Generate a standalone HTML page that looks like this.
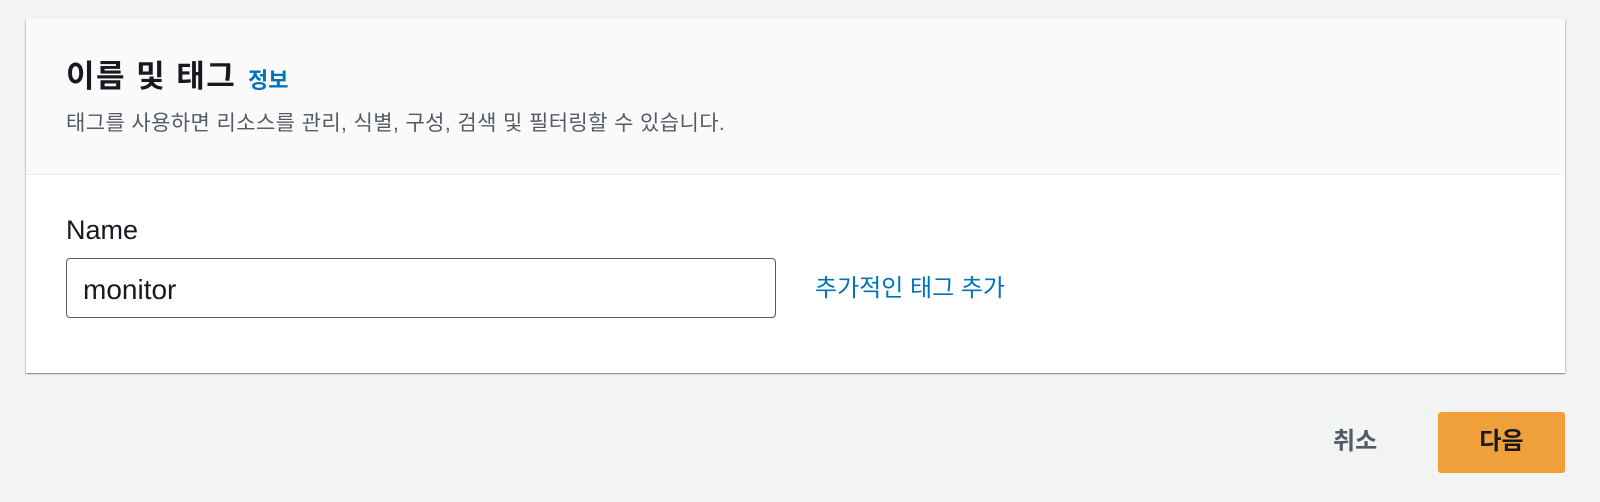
<!DOCTYPE html>
<html><head><meta charset="utf-8"><style>
body{margin:0;width:1600px;height:502px;background:#f2f3f3;font-family:"Liberation Sans","Noto Sans CJK KR",sans-serif;position:relative;overflow:hidden}
.panel{position:absolute;left:26px;top:19px;width:1539px;height:354px;background:#fff;box-shadow:0 1px 1px 0 rgba(0,28,36,.3),1px 1px 1px 0 rgba(0,28,36,.15),-1px 1px 1px 0 rgba(0,28,36,.15)}
.head{position:absolute;left:0;top:0;width:100%;height:155px;background:#fafafa;border-bottom:1px solid #eaeded}
.t{position:absolute;white-space:nowrap;line-height:1}
</style></head><body>
<div class="panel"><div class="head"></div></div>
<div class="t" style="left:66px;top:61px;font-size:31px;letter-spacing:1.5px;font-weight:bold;color:#16191f">이름 및 태그</div>
<div class="t" style="left:248px;top:70px;font-size:22px;font-weight:bold;color:#0073bb">정보</div>
<div class="t" style="left:66px;top:113px;font-size:21px;letter-spacing:0.4px;color:#545b64">태그를 사용하면 리소스를 관리, 식별, 구성, 검색 및 필터링할 수 있습니다.</div>
<div class="t" style="left:66px;top:217px;font-size:27px;color:#16191f">Name</div>
<div style="position:absolute;left:66px;top:258px;width:710px;height:60px;box-sizing:border-box;border:1px solid #545b64;border-radius:4px;background:#fff"></div>
<div class="t" style="left:83px;top:276px;font-size:28px;color:#16191f">monitor</div>
<div class="t" style="left:815px;top:277px;font-size:24px;color:#0073bb">추가적인 태그 추가</div>
<div class="t" style="left:1333px;top:430px;font-size:24px;font-weight:bold;color:#545b64">취소</div>
<div style="position:absolute;left:1438px;top:412px;width:127px;height:61px;background:#f0a03a;border-radius:3px;box-sizing:border-box;border:1px solid #f39b2b"></div>
<div class="t" style="left:1438px;top:430px;width:127px;text-align:center;font-size:24px;font-weight:bold;color:#16191f">다음</div>
</body></html>
